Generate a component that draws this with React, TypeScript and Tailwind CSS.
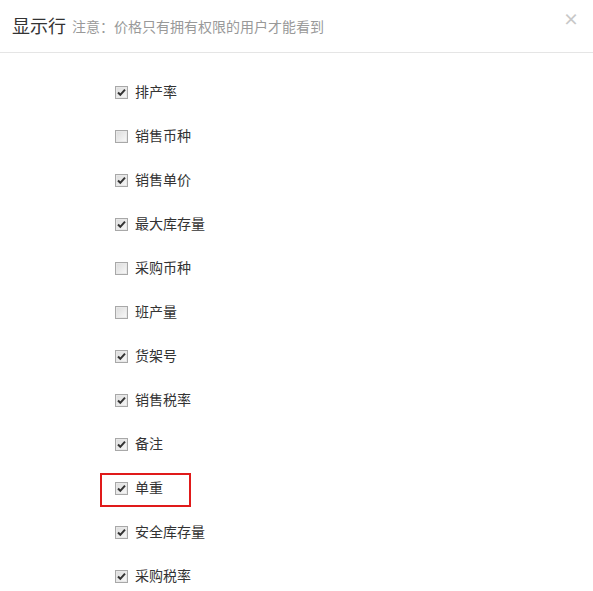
import React from "react";

const items: { label: string; checked: boolean; highlight?: boolean }[] = [
  { label: "排产率", checked: true },
  { label: "销售币种", checked: false },
  { label: "销售单价", checked: true },
  { label: "最大库存量", checked: true },
  { label: "采购币种", checked: false },
  { label: "班产量", checked: false },
  { label: "货架号", checked: true },
  { label: "销售税率", checked: true },
  { label: "备注", checked: true },
  { label: "单重", checked: true, highlight: true },
  { label: "安全库存量", checked: true },
  { label: "采购税率", checked: true },
];

function Box({ checked }: { checked: boolean }) {
  return (
    <svg width="13" height="13" viewBox="0 0 13 13" className="shrink-0">
      <defs>
        <linearGradient id="cbg" x1="0" y1="0" x2="1" y2="1">
          <stop offset="0" stopColor="#dcdcdc" />
          <stop offset="1" stopColor="#f8f8f8" />
        </linearGradient>
      </defs>
      <rect x="0.5" y="0.5" width="12" height="12" fill="#b0b0b0" stroke="#a8a8a8" />
      <rect x="1.5" y="1.5" width="10" height="10" fill="url(#cbg)" stroke="#e8e8e8" />
      {checked && (
        <path d="M3 6.5 L5.3 8.8 L10 3.6" fill="none" stroke="#333" strokeWidth="2" strokeLinejoin="miter" />
      )}
    </svg>
  );
}

export default function App() {
  return (
    <div className="w-[593px] h-[591px] bg-white overflow-hidden" style={{ fontFamily: '"Noto Sans CJK SC", sans-serif' }}>
      {/* header */}
      <div className="relative h-[53px] border-b border-[#e5e5e5] flex items-center pl-[12px] pb-[3px]">
        <span className="text-[18px] text-[#333] leading-none">显示行</span>
        <span className="ml-[6px] text-[14px] text-[#999] leading-none pt-[2px]">注意：价格只有拥有权限的用户才能看到</span>
        <span className="absolute right-[14px] top-[10px] text-[16px] font-bold text-[#c8c8c8] leading-none">×</span>
      </div>

      {/* list */}
      <div className="pt-[16px] pl-[100px]">
        {items.map((it) => (
          <div key={it.label} className="h-[44px] flex items-center">
            <div
              className={
                "inline-flex items-center gap-[7px] h-[34px] w-[91px] pl-[13px] border-2 translate-y-[3px] " +
                (it.highlight ? "border-[#e01a1a]" : "border-transparent")
              }
            >
              <span className="-translate-y-[2px] flex">
                <Box checked={it.checked} />
              </span>
              <span className="text-[14px] text-[#333] whitespace-nowrap leading-none -translate-y-[3px]">{it.label}</span>
            </div>
          </div>
        ))}
      </div>
    </div>
  );
}
